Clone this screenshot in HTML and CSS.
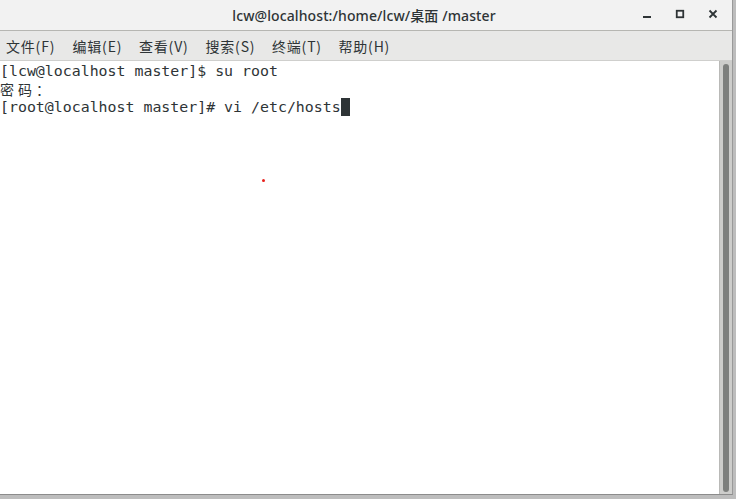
FILE: index.html
```html
<!DOCTYPE html>
<html lang="zh-CN">
<head>
    <meta charset="UTF-8">
    <title>lcw@localhost:/home/lcw/桌面/master</title>
    <link rel="stylesheet" href="styles.css">
</head>
<body>
    <div class="window">
        <div class="titlebar">
            <div class="title">lcw@localhost:/home/lcw/桌面 /master</div>
            <div class="controls">
                <svg width="10" height="10" viewBox="0 0 10 10"><rect x="1" y="7" width="8" height="2" fill="#2e3436"/></svg>
                <svg width="10" height="10" viewBox="0 0 10 10"><rect x="1.75" y="1.75" width="6.5" height="6.5" fill="none" stroke="#2e3436" stroke-width="1.8"/></svg>
                <svg width="10" height="10" viewBox="0 0 10 10"><path d="M1.5 1.5 L8.5 8.5 M8.5 1.5 L1.5 8.5" stroke="#2e3436" stroke-width="1.8"/></svg>
            </div>
        </div>

        <div class="menubar">
            <span>文件(F)</span>
            <span>编辑(E)</span>
            <span>查看(V)</span>
            <span>搜索(S)</span>
            <span>终端(T)</span>
            <span>帮助(H)</span>
        </div>

        <div class="terminal">
            <div class="screen">
                <div class="line">[lcw@localhost master]$ su root</div>
                <div class="line"><span class="wide">密</span><span class="wide">码</span><span class="wide">：</span></div>
                <div class="line">[root@localhost master]# vi /etc/hosts<span class="cursor"></span></div>
                <span class="dot"></span>
            </div>
            <div class="scrollbar"><div class="thumb"></div></div>
        </div>
    </div>
</body>
</html>
```

FILE: styles.css
```css
/* Janela do terminal */
body {
    margin: 0;
    background-color: #bdbdbd;
    font-family: 'Noto Sans', 'Noto Sans CJK SC', sans-serif;
    color: #2e3436;
    height: 499px;
    overflow: hidden;
}

.window {
    width: 732px;
    height: 494px;
    display: flex;
    flex-direction: column;
    background-color: #fff;
    border-right: 1px solid #9a9a9a;
    border-bottom: 1px solid #8c8c8c;
}

.titlebar {
    height: 30px;
    background-color: #f2f2f2;
    border-bottom: 1px solid #b6b6b2;
    display: flex;
    align-items: center;
    position: relative;
}

.title {
    flex: 1;
    text-align: center;
    font-size: 14px;
    font-weight: 500;
    letter-spacing: 0.1px;
    padding-right: 4px;
    white-space: pre;
}

.controls {
    position: absolute;
    right: 14px;
    top: 9px;
    display: flex;
    gap: 23px;
}

.menubar {
    height: 29px;
    background-color: #e8e8e7;
    border-bottom: 1px solid #cfcfcd;
    display: flex;
    align-items: center;
    padding-left: 6px;
    gap: 16px;
    font-family: 'Noto Sans CJK SC', sans-serif;
    font-size: 14px;
    letter-spacing: 0.8px;
    color: #2e3436;
}

.menubar span {
    width: 50.5px;
    white-space: nowrap;
}

.terminal {
    flex: 1;
    display: flex;
    min-height: 0;
}

.screen {
    flex: 1;
    position: relative;
    padding-top: 2px;
    font-family: 'DejaVu Sans Mono', 'Noto Sans CJK SC', monospace;
    font-size: 14.9px;
    line-height: 17.5px;
    color: #2e3436;
}

.line {
    white-space: pre;
    height: 17.5px;
}

.wide {
    display: inline-block;
    width: 18px;
    font-family: 'Noto Sans CJK SC', sans-serif;
    font-size: 14px;
}

.cursor {
    display: inline-block;
    width: 9px;
    height: 18px;
    background-color: #2e3436;
    vertical-align: -4px;
}

.dot {
    position: absolute;
    left: 262px;
    top: 118px;
    width: 3px;
    height: 3px;
    border-radius: 50%;
    background-color: #e8201c;
}

.scrollbar {
    width: 12px;
    background-color: #cdcdcb;
    border-left: 1px solid #b9b9b7;
    padding: 3px 0 2px 0;
    display: flex;
    justify-content: center;
}

.thumb {
    width: 6px;
    background-color: #7d7f7d;
    border-radius: 3px;
}
```
